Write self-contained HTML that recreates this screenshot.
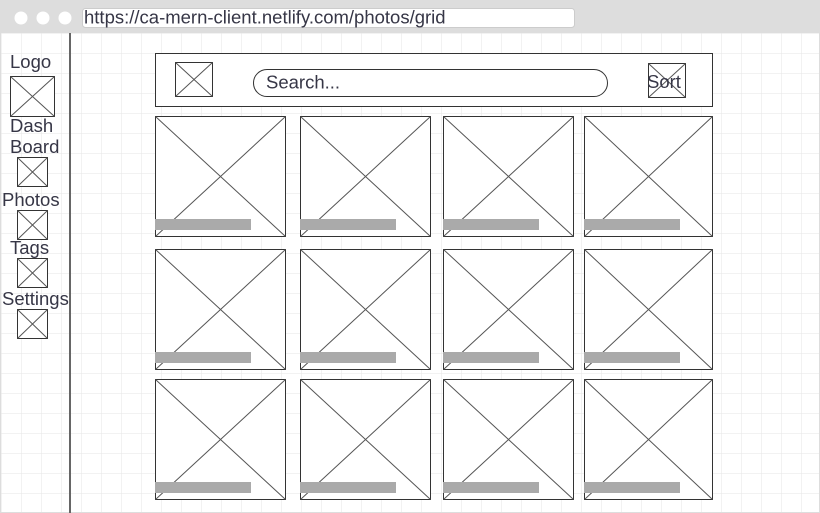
<!DOCTYPE html>
<html><head><meta charset="utf-8"><style>
html,body{margin:0;padding:0;width:820px;height:513px;overflow:hidden;background:#fff}
svg{display:block}
text{font-family:"Liberation Sans",sans-serif;fill:#363646}
</style></head><body>
<svg width="820" height="513" viewBox="0 0 820 513" xmlns="http://www.w3.org/2000/svg">
<defs>
<pattern id="g" x="1" y="13" width="20" height="20" patternUnits="userSpaceOnUse">
<path d="M0 0H20M0 0V20" stroke="#e6e6e6" stroke-width="1" fill="none"/>
</pattern>
</defs>
<rect x="0" y="0" width="820" height="513" fill="#fff"/>
<rect x="0" y="33" width="820" height="480" fill="url(#g)"/>
<rect x="0.5" y="0.5" width="819" height="512" fill="none" stroke="#ddd"/>
<rect x="0" y="0" width="820" height="33" fill="#dddddd"/>
<circle cx="21" cy="18" r="6.5" fill="#fff"/>
<circle cx="43" cy="18" r="6.5" fill="#fff"/>
<circle cx="65" cy="18" r="6.5" fill="#fff"/>
<rect x="82.5" y="8.5" width="492" height="19" rx="3" fill="#fff" stroke="#ccc"/>
<text x="84" y="23.5" font-size="18.5">https://ca-mern-client.netlify.com/photos/grid</text>
<rect x="69" y="33" width="2" height="480" fill="#666"/>
<g stroke="#333" fill="#fff" stroke-width="1">
<rect x="10.5" y="76.5" width="44" height="40"/>
<rect x="17.5" y="157.5" width="30" height="29"/>
<rect x="17.5" y="210.5" width="30" height="29"/>
<rect x="17.5" y="258.5" width="30" height="29"/>
<rect x="17.5" y="309.5" width="30" height="29"/>
</g>
<g stroke="#555" stroke-width="1">
<path d="M10.5 76.5L54.5 116.5M54.5 76.5L10.5 116.5"/>
<path d="M17.5 157.5L47.5 186.5M47.5 157.5L17.5 186.5"/>
<path d="M17.5 210.5L47.5 239.5M47.5 210.5L17.5 239.5"/>
<path d="M17.5 258.5L47.5 287.5M47.5 258.5L17.5 287.5"/>
<path d="M17.5 309.5L47.5 338.5M47.5 309.5L17.5 338.5"/>
</g>
<g font-size="18.5">
<text x="10" y="68">Logo</text>
<text x="10" y="132">Dash</text>
<text x="10" y="153">Board</text>
<text x="2" y="206">Photos</text>
<text x="10" y="254">Tags</text>
<text x="2" y="305">Settings</text>
</g>
<rect x="155.5" y="53.5" width="557" height="53" fill="#fff" stroke="#333"/>
<rect x="175.5" y="62.5" width="37" height="34" fill="#fff" stroke="#333"/>
<path d="M175.5 62.5L212.5 96.5M212.5 62.5L175.5 96.5" stroke="#555"/>
<rect x="253.5" y="69.5" width="354" height="27" rx="13.5" fill="#fff" stroke="#333"/>
<text x="266" y="88.5" font-size="18.5">Search...</text>
<rect x="648.5" y="63.5" width="37" height="34" fill="#fff" stroke="#333"/>
<path d="M648.5 63.5L685.5 97.5M685.5 63.5L648.5 97.5" stroke="#555"/>
<text x="647" y="88" font-size="18.5">Sort</text>
<g id="row">
<g>
<rect x="155.5" y="116.5" width="130" height="120" fill="#fff" stroke="#333"/>
<path d="M155.5 116.5L285.5 236.5M285.5 116.5L155.5 236.5" stroke="#555"/>
<rect x="155" y="219" width="96" height="11" fill="#aaa"/>
</g>
<g>
<rect x="300.5" y="116.5" width="130" height="120" fill="#fff" stroke="#333"/>
<path d="M300.5 116.5L430.5 236.5M430.5 116.5L300.5 236.5" stroke="#555"/>
<rect x="300" y="219" width="96" height="11" fill="#aaa"/>
</g>
<g>
<rect x="443.5" y="116.5" width="130" height="120" fill="#fff" stroke="#333"/>
<path d="M443.5 116.5L573.5 236.5M573.5 116.5L443.5 236.5" stroke="#555"/>
<rect x="443" y="219" width="96" height="11" fill="#aaa"/>
</g>
<g>
<rect x="584.5" y="116.5" width="128" height="120" fill="#fff" stroke="#333"/>
<path d="M584.5 116.5L712.5 236.5M712.5 116.5L584.5 236.5" stroke="#555"/>
<rect x="584" y="219" width="96" height="11" fill="#aaa"/>
</g>
</g>
<use href="#row" y="133"/>
<use href="#row" y="263"/>
</svg>
</body></html>
